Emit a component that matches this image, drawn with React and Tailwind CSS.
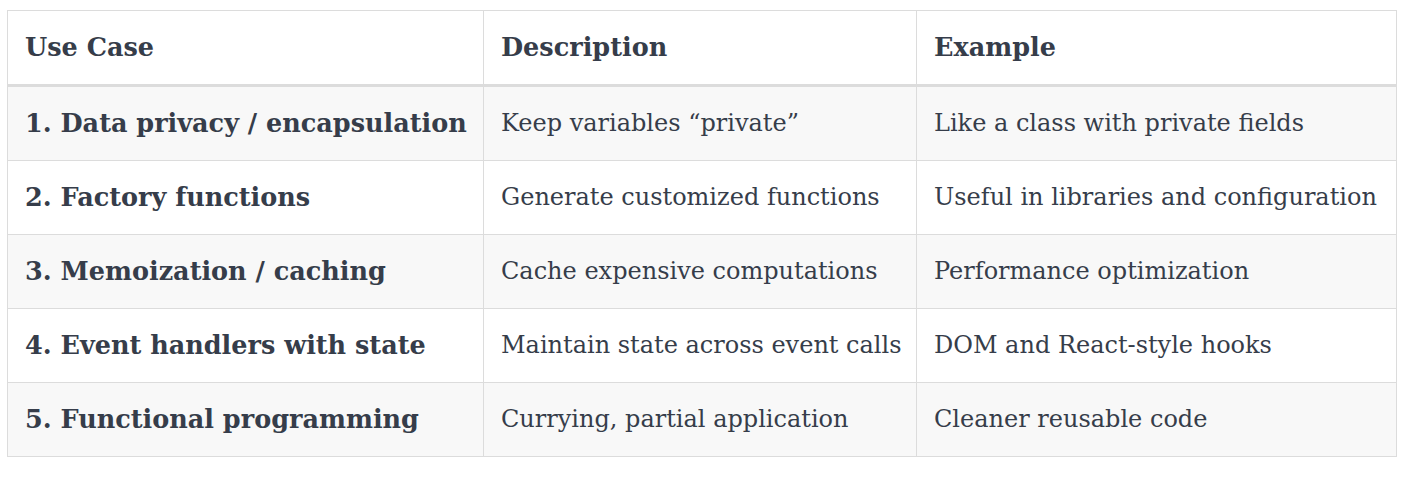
export default function App() {
  const rows = [
    ["1. Data privacy / encapsulation", "Keep variables \u201cprivate\u201d", "Like a class with private fields"],
    ["2. Factory functions", "Generate customized functions", "Useful in libraries and configuration"],
    ["3. Memoization / caching", "Cache expensive computations", "Performance optimization"],
    ["4. Event handlers with state", "Maintain state across event calls", "DOM and React-style hooks"],
    ["5. Functional programming", "Currying, partial application", "Cleaner reusable code"],
  ];
  return (
    <div className="bg-white min-h-[482px] pt-[10px] pl-[7px] text-[#363d4a]" style={{ fontFamily: '"DejaVu Serif", Georgia, serif' }}>
      <table className="border-collapse text-[24px] leading-[31px] table-fixed w-[1389px]">
        <colgroup>
          <col className="w-[476px]" />
          <col className="w-[433px]" />
          <col className="w-[480px]" />
        </colgroup>
        <thead>
          <tr>
            {["Use Case", "Description", "Example"].map((h) => (
              <th key={h} className="border border-[#dcdcdc] border-b-[3px] text-left font-bold text-[25.5px] leading-[31px] px-[17px] py-[21px] whitespace-nowrap">
                {h}
              </th>
            ))}
          </tr>
        </thead>
        <tbody>
          {rows.map((r, i) => (
            <tr key={i} className={i % 2 === 0 ? "bg-[#f8f8f8]" : "bg-white"}>
              <td className="border border-[#dcdcdc] px-[17px] py-[21px] font-bold text-[25.5px] whitespace-nowrap">{r[0]}</td>
              <td className="border border-[#dcdcdc] px-[17px] py-[21px] whitespace-nowrap">{r[1]}</td>
              <td className="border border-[#dcdcdc] px-[17px] py-[21px] whitespace-nowrap">{r[2]}</td>
            </tr>
          ))}
        </tbody>
      </table>
    </div>
  );
}
